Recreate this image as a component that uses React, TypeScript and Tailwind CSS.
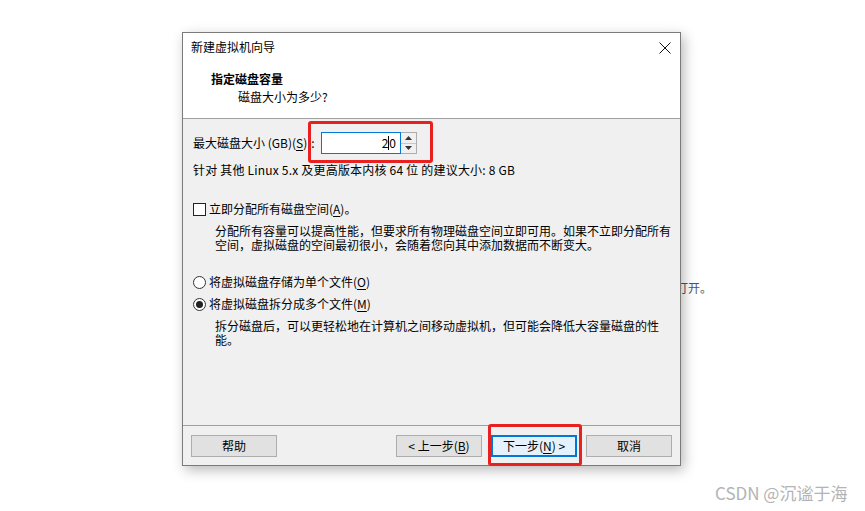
import React from "react";

const font = { fontFamily: '"Noto Sans CJK SC", "Noto Sans", sans-serif' };

function U({ children }: { children: React.ReactNode }) {
  return <span className="underline underline-offset-2">{children}</span>;
}

function Btn({ children, primary }: { children: React.ReactNode; primary?: boolean }) {
  return (
    <div
      className={
        "w-[86px] h-[22px] flex items-center justify-center text-[12px] leading-[14px] text-black " +
        (primary ? "border-2 border-[#0078d7] bg-[#e5f1fb]" : "border border-[#adadad] bg-[#e1e1e1]")
      }
    >
      {children}
    </div>
  );
}

export default function App() {
  return (
    <div className="relative w-[865px] h-[511px] bg-white overflow-hidden" style={font}>
      {/* background text partially covered */}
      <div className="absolute left-[664px] top-[280px] text-[12px] leading-[16px] text-[#555]">以打开。</div>

      <div className="relative z-10 pl-[182px] pt-[32px]">
        <div className="w-[499px] h-[434px] border border-[#7a7a7a] bg-[#f0f0f0] flex flex-col shadow-[3px_4px_12px_rgba(0,0,0,0.28)]">
          {/* header */}
          <div className="h-[86px] bg-white border-b border-[#a0a0a0] flex flex-col">
            <div className="flex items-center justify-between pt-[7px] pl-[8px] pr-[9px]">
              <span className="text-[12px] leading-[14px] text-black">新建虚拟机向导</span>
              <svg width="12" height="12" viewBox="0 0 12 12" className="mt-[1px]">
                <path d="M0.5 0.5 L11.5 11.5 M11.5 0.5 L0.5 11.5" stroke="#111" strokeWidth="1" />
              </svg>
            </div>
            <div className="pl-[28px] mt-[18px] text-[12px] leading-[14px] font-bold text-black">指定磁盘容量</div>
            <div className="pl-[55px] mt-[4px] text-[12px] leading-[14px] text-black">磁盘大小为多少?</div>
          </div>

          {/* body */}
          <div className="flex-1 flex flex-col pl-[10px] text-[12px] text-black">
            <div className="mt-[13px] h-[22px] flex items-center">
              <span className="leading-[14px] w-[128px] whitespace-nowrap">
                最大磁盘大小 (GB)(<U>S</U>)<span className="ml-[4px]">:</span>
              </span>
              <div className="w-[80px] h-[22px] border border-[#0078d7] bg-white flex items-center justify-end pr-[4px] leading-[14px]">
                <span>2</span>
                <span className="inline-block w-[1px] h-[14px] bg-black"></span>
                <span>0</span>
              </div>
              <div className="w-[16px] h-[22px] flex flex-col border border-[#adadad] border-l-0 bg-[#f0f0f0]">
                <div className="flex-1 flex items-center justify-center border-b border-[#c8c8c8]">
                  <svg width="7" height="4" viewBox="0 0 7 4"><path d="M3.5 0 L7 4 L0 4 Z" fill="#333" /></svg>
                </div>
                <div className="flex-1 flex items-center justify-center">
                  <svg width="7" height="4" viewBox="0 0 7 4"><path d="M0 0 L7 0 L3.5 4 Z" fill="#333" /></svg>
                </div>
              </div>
            </div>

            <div className="mt-[9px] leading-[14px] tracking-[0.2px]">
              针对 其他 Linux 5.x 及更高版本内核 64 位 的建议大小: 8 GB
            </div>

            <div className="mt-[25px] h-[14px] flex items-center">
              <div className="w-[13px] h-[13px] border border-[#222] bg-white"></div>
              <span className="ml-[3px] leading-[14px]">
                立即分配所有磁盘空间(<U>A</U>)。
              </span>
            </div>
            <div className="mt-[8px] pl-[22px] leading-[14px]">
              分配所有容量可以提高性能，但要求所有物理磁盘空间立即可用。如果不立即分配所有
              <br />
              空间，虚拟磁盘的空间最初很小，会随着您向其中添加数据而不断变大。
            </div>

            <div className="mt-[23px] h-[14px] flex items-center">
              <div className="w-[13px] h-[13px] rounded-full border border-[#333] bg-white"></div>
              <span className="ml-[3px] leading-[14px]">
                将虚拟磁盘存储为单个文件(<U>O</U>)
              </span>
            </div>
            <div className="mt-[8px] h-[14px] flex items-center">
              <div className="w-[13px] h-[13px] rounded-full border border-[#333] bg-white flex items-center justify-center">
                <div className="w-[7px] h-[7px] rounded-full bg-[#222]"></div>
              </div>
              <span className="ml-[3px] leading-[14px]">
                将虚拟磁盘拆分成多个文件(<U>M</U>)
              </span>
            </div>
            <div className="mt-[8px] pl-[22px] leading-[14px]">
              拆分磁盘后，可以更轻松地在计算机之间移动虚拟机，但可能会降低大容量磁盘的性
              <br />
              能。
            </div>
          </div>

          {/* footer */}
          <div className="h-[40px] border-t border-[#a0a0a0] flex items-start pt-[9px] pl-[8px]">
            <Btn>帮助</Btn>
            <div className="ml-[119px]">
              <Btn>
                &lt; 上一步(<U>B</U>)
              </Btn>
            </div>
            <div className="ml-[9px]">
              <Btn primary>
                下一步(<U>N</U>) &gt;
              </Btn>
            </div>
            <div className="ml-[9px]">
              <Btn>取消</Btn>
            </div>
          </div>
        </div>
      </div>

      {/* annotation boxes */}
      <div className="absolute z-20 left-[308px] top-[121px] w-[125px] h-[42px] border-[3px] border-[#e8201f] rounded-[3px]"></div>
      <div className="absolute z-20 left-[488px] top-[424px] w-[94px] h-[42px] border-[3px] border-[#e8201f] rounded-[3px]"></div>

      {/* watermark */}
      <div className="absolute z-20 left-[715px] top-[482px] text-[17px] leading-[22px] text-[#b3b3b3]">CSDN @沉谧于海</div>
    </div>
  );
}
